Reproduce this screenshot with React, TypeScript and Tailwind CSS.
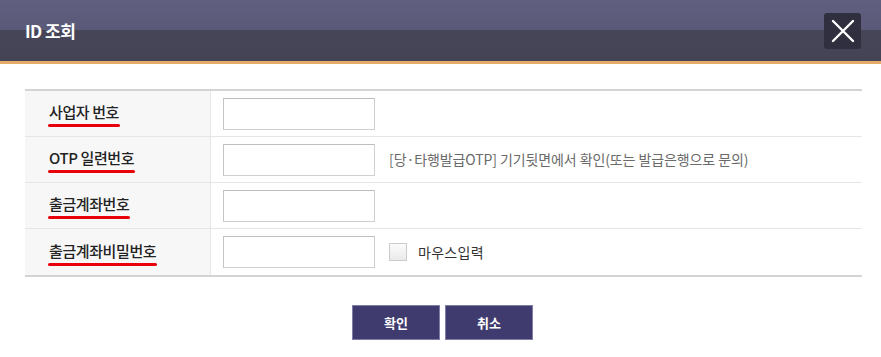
import { useState } from 'react';

const rows = [
  { label: '사업자 번호', extra: null },
  { label: 'OTP 일련번호', extra: 'hint' },
  { label: '출금계좌번호', extra: null },
  { label: '출금계좌비밀번호', extra: 'mouse' }
];

export default function App() {
  const [mouseInput, setMouseInput] = useState(false);

  return (
    <div className="h-[357px] w-[881px] overflow-hidden bg-white font-['Noto_Sans_CJK_KR','Noto_Sans',sans-serif]">
      <header className="flex h-[64px] items-center justify-between border-b-[3px] border-[#e2ab68] bg-[linear-gradient(to_bottom,#605f7f_0px,#5a5978_30px,#474659_30px,#444355_61px)] pl-[25px] pr-[20px]">
        <h1 className="text-[17px] font-bold tracking-[-0.5px] text-white">ID 조회</h1>
        <button className="flex h-[36px] w-[37px] items-center justify-center rounded-[3px] bg-[#2f2f3f]" aria-label="닫기">
          <svg width="24" height="24" viewBox="0 0 24 24" fill="none" stroke="white" strokeWidth="2.4" strokeLinecap="round">
            <path d="M2 2L22 22M22 2L2 22" />
          </svg>
        </button>
      </header>

      <div className="pl-[25px] pr-[19px] pt-[25px]">
        <div className="border-y-2 border-[#d4d4d4]">
          {rows.map((row, index) => (
            <div
              key={row.label}
              className={`flex h-[46px] ${index < rows.length - 1 ? 'border-b border-[#e6e6e6]' : ''}`}
            >
              <div className="flex w-[186px] shrink-0 items-center border-r border-[#e6e6e6] bg-[#f7f7f7] pl-[24px] pt-[3px]">
                <span className="inline-flex flex-col">
                  <span className="text-[15px] font-medium leading-[17px] tracking-[-0.4px] text-[#222]">{row.label}</span>
                  <span className="-mx-[1px] mt-[4px] h-[3px] rounded-full bg-[#e8000b]" />
                </span>
              </div>
              <div className="flex flex-1 items-center pl-[12px]">
                <input className="h-[32px] w-[152px] border border-[#cfcfcf] border-t-[#bdbdbd] border-l-[#c4c4c4] bg-white outline-none" />
                {row.extra === 'hint' ? (
                  <span className="ml-[14px] text-[14px] tracking-[-0.1px] text-[#6a6a6a]">
                    [당·타행발급OTP] 기기뒷면에서 확인(또는 발급은행으로 문의)
                  </span>
                ) : null}
                {row.extra === 'mouse' ? (
                  <label className="ml-[14px] flex items-center gap-[11px]">
                    <input
                      type="checkbox"
                      checked={mouseInput}
                      onChange={(event) => setMouseInput(event.target.checked)}
                      className="h-[18px] w-[18px] appearance-none border border-[#cbcbcb] bg-[linear-gradient(to_bottom,#fbfbfb,#eaeaea)]"
                    />
                    <span className="text-[14px] tracking-[0.3px] text-[#333]">마우스입력</span>
                  </label>
                ) : null}
              </div>
            </div>
          ))}
        </div>

        <div className="mt-[28px] flex justify-center gap-[5px] pr-[2px]">
          <button className="h-[35px] w-[88px] border border-[#807ca6] bg-[#3f3b6f] text-[13px] font-bold text-white">확인</button>
          <button className="h-[35px] w-[88px] border border-[#807ca6] bg-[#3f3b6f] text-[13px] font-bold text-white">취소</button>
        </div>
      </div>
    </div>
  );
}
